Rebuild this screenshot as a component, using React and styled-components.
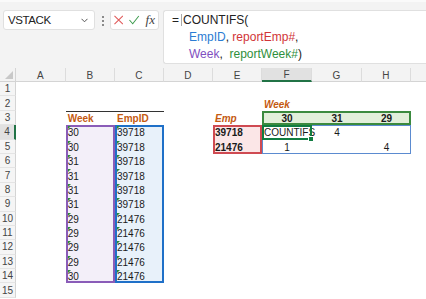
import styled, { createGlobalStyle } from "styled-components";

const GlobalStyle = createGlobalStyle`
    html, body {
        margin: 0;
        padding: 0;
        background: #ffffff;
        font-family: "Liberation Sans", Arial, sans-serif;
    }
`;

const Page = styled.div`
    width: 426px;
    height: 299px;
    overflow: hidden;
    background: #ffffff;
`;

const TopBar = styled.div`
    display: flex;
    align-items: flex-start;
    height: 68px;
    box-sizing: border-box;
    padding: 8px 0 0 3px;
    background: #f3f3f3;
    border-top: 2px solid #fafafa;
`;

const NameBox = styled.div`
    display: flex;
    align-items: center;
    justify-content: space-between;
    width: 92px;
    height: 20px;
    box-sizing: border-box;
    padding: 0 6px 0 4px;
    background: #ffffff;
    border: 1px solid #e0e0e0;
    border-radius: 3px;
    font-size: 11.5px;
    letter-spacing: -0.4px;
    color: #222;
`;

const Dots = styled.div`
    display: flex;
    flex-direction: column;
    gap: 2px;
    padding: 6px 6px 0 7px;
    span {
        width: 2px;
        height: 2px;
        background: #666;
        border-radius: 1px;
    }
`;

const IconBox = styled.div`
    display: flex;
    align-items: center;
    gap: 6px;
    width: 49px;
    height: 20px;
    box-sizing: border-box;
    padding: 0 3px 0 3px;
    background: #ffffff;
    border: 1px solid #e0e0e0;
    border-radius: 3px;
`;

const Fx = styled.span`
    font-family: "Liberation Serif", "Times New Roman", serif;
    font-style: italic;
    font-size: 13px;
    color: #444;
    line-height: 1;
    margin-top: -2px;
`;

const FormulaBox = styled.div`
    flex: 1;
    height: 54px;
    margin-left: 4px;
    box-sizing: border-box;
    padding: 1px 0 0 8px;
    background: #ffffff;
    border: 1px solid #e0e0e0;
    border-right: none;
    border-radius: 3px 0 0 3px;
    font-size: 12px;
    line-height: 17px;
    color: #222;
`;

const Line = styled.div`
    white-space: pre;
    padding-left: ${(p) => (p.$indent ? "17px" : "0")};
`;

const Caret = styled.span`
    display: inline-block;
    width: 1px;
    height: 12px;
    margin: 0 1px -2px 2px;
    background: #aaa;
`;

const Ref = styled.span`
    color: ${(p) => p.$color};
`;

const Sheet = styled.div`
    display: grid;
    grid-template-columns: 16px 49.7px 49.3px 49px 49px 49px 50px 50px 49px 49px;
    grid-template-rows: 14px repeat(15, 14.4px);
    font-size: 10px;
`;

const Corner = styled.div`
    grid-column: 1;
    grid-row: 1;
    background: #f3f3f3;
    border-right: 1px solid #d4d4d4;
    border-bottom: 1px solid #d4d4d4;
    display: flex;
    align-items: flex-end;
    justify-content: flex-end;
    padding: 0 2px 2px 0;
`;

const ColHeader = styled.div`
    grid-row: 1;
    grid-column: ${(p) => p.$col};
    display: flex;
    align-items: center;
    justify-content: center;
    color: #444;
    background: ${(p) => (p.$selected ? "#e1e1e1" : "#f3f3f3")};
    border-right: 1px solid #dcdcdc;
    border-bottom: ${(p) => (p.$selected ? "2px solid #217346" : "1px solid #d4d4d4")};
    box-sizing: border-box;
    padding-top: 1px;
`;

const RowHeader = styled.div`
    grid-column: 1;
    grid-row: ${(p) => p.$row + 1};
    display: flex;
    align-items: center;
    justify-content: center;
    color: #444;
    background: ${(p) => (p.$selected ? "#e1e1e1" : "#f5f5f5")};
    border-right: ${(p) => (p.$selected ? "2px solid #217346" : "1px solid #d4d4d4")};
    border-bottom: 1px solid #e4e4e4;
    box-sizing: border-box;
`;

const Range = styled.div`
    grid-column: ${(p) => p.$cols};
    grid-row: ${(p) => p.$rows};
    background: ${(p) => p.$fill || "transparent"};
    border: ${(p) => p.$border || "none"};
    border-top: ${(p) => p.$top || undefined};
    box-sizing: border-box;
    z-index: ${(p) => p.$z || 1};
`;

const ActiveCell = styled.div`
    grid-column: 7;
    grid-row: 5;
    position: relative;
    border: 2px solid #107c41;
    box-sizing: border-box;
    z-index: 4;
    &::after {
        content: "";
        position: absolute;
        right: -4px;
        bottom: -4px;
        width: 4px;
        height: 4px;
        background: #107c41;
        border: 1px solid #ffffff;
    }
`;

const Cell = styled.div`
    grid-column: ${(p) => p.$col};
    grid-row: ${(p) => p.$row + 1};
    position: relative;
    display: flex;
    align-items: center;
    justify-content: ${(p) => (p.$align === "center" ? "center" : "flex-start")};
    padding: 1px 2px 0 2px;
    white-space: nowrap;
    color: ${(p) => p.$color || "#1a1a1a"};
    font-weight: ${(p) => (p.$bold ? "bold" : "normal")};
    font-style: ${(p) => (p.$italic ? "italic" : "normal")};
    z-index: 3;
    &::before {
        content: "";
        display: ${(p) => (p.$flag ? "block" : "none")};
        position: absolute;
        left: 2px;
        top: 1px;
        border-top: 3px solid #2e8b3a;
        border-right: 3px solid transparent;
    }
`;

// the last header (column I) sits mostly off screen, so it stays unlabelled
const columns = ["A", "B", "C", "D", "E", "F", "G", "H", ""];
const weeks = [30, 30, 31, 31, 31, 31, 29, 29, 29, 29, 30];
const emps = [39718, 39718, 39718, 39718, 39718, 39718, 21476, 21476, 21476, 21476, 21476];
const orange = "#c55a11";

const App = () => {
    return (
        <Page>
            <GlobalStyle />
            <TopBar>
                <NameBox>
                    <span>VSTACK</span>
                    <svg width="7" height="5" viewBox="0 0 7 5">
                        <polyline points="0.5,0.8 3.5,3.8 6.5,0.8" fill="none" stroke="#555" strokeWidth="1" />
                    </svg>
                </NameBox>
                <Dots>
                    <span />
                    <span />
                    <span />
                </Dots>
                <IconBox>
                    <svg width="10" height="10" viewBox="0 0 10 10">
                        <path d="M0.5 0.5 L9.5 9.5 M9.5 0.5 L0.5 9.5" stroke="#e05a5a" strokeWidth="1.1" />
                    </svg>
                    <svg width="11" height="10" viewBox="0 0 11 10">
                        <polyline points="0.5,5 4,9 10.5,0.7" fill="none" stroke="#3f9c4f" strokeWidth="1.1" />
                    </svg>
                    <Fx>fx</Fx>
                </IconBox>
                <FormulaBox>
                    <Line>
                        =<Caret />COUNTIFS(
                    </Line>
                    <Line $indent>
                        <Ref $color="#2b7cd3">EmpID</Ref>, <Ref $color="#d13438">reportEmp#</Ref>,
                    </Line>
                    <Line $indent>
                        <Ref $color="#8050c0">Week</Ref>,  <Ref $color="#2f8f3c">reportWeek#</Ref>)
                    </Line>
                </FormulaBox>
            </TopBar>
            <Sheet>
                <Corner>
                    <svg width="8" height="8" viewBox="0 0 8 8">
                        <polygon points="8,0 8,8 0,8" fill="#c8c8c8" />
                    </svg>
                </Corner>
                {columns.map((c, i) => (
                    <ColHeader key={i} $col={i + 2} $selected={c === "F"}>
                        {c}
                    </ColHeader>
                ))}
                {Array.from({ length: 15 }, (_, i) => (
                    <RowHeader key={i} $row={i + 1} $selected={i + 1 === 4}>
                        {i + 1}
                    </RowHeader>
                ))}

                <Range $cols="3 / 5" $rows="4" $top="1px solid #333" />
                <Range $cols="3" $rows="5 / 16" $fill="#f3eff9" $border="2px solid #8a5cb8" />
                <Range $cols="4" $rows="5 / 16" $fill="#e8f1fa" $border="2px solid #1f70c8" />
                <Range $cols="7 / 10" $rows="4" $fill="#e2efda" $border="2px solid #3b8a3e" $z={2} />
                <Range $cols="6" $rows="5 / 7" $fill="#fbe6e7" $border="2px solid #cf4a52" />
                <Range $cols="7 / 10" $rows="5 / 7" $border="1px solid #5b8bd0" />
                <ActiveCell />

                <Cell $col={3} $row={3} $bold $color={orange}>Week</Cell>
                <Cell $col={4} $row={3} $bold $color={orange}>EmpID</Cell>
                {weeks.map((w, i) => (
                    <Cell key={"w" + i} $col={3} $row={i + 4} $flag>
                        {w}
                    </Cell>
                ))}
                {emps.map((e, i) => (
                    <Cell key={"e" + i} $col={4} $row={i + 4} $flag>
                        {e}
                    </Cell>
                ))}

                <Cell $col={7} $row={2} $bold $italic $color={orange}>Week</Cell>
                <Cell $col={6} $row={3} $bold $italic $color={orange}>Emp</Cell>
                <Cell $col={7} $row={3} $bold $align="center">30</Cell>
                <Cell $col={8} $row={3} $bold $align="center">31</Cell>
                <Cell $col={9} $row={3} $bold $align="center">29</Cell>
                <Cell $col={6} $row={4} $bold>39718</Cell>
                <Cell $col={6} $row={5} $bold>21476</Cell>
                <Cell $col={7} $row={4}>COUNTIFS</Cell>
                <Cell $col={8} $row={4} $align="center">4</Cell>
                <Cell $col={7} $row={5} $align="center">1</Cell>
                <Cell $col={9} $row={5} $align="center">4</Cell>
            </Sheet>
        </Page>
    );
};

export default App;
